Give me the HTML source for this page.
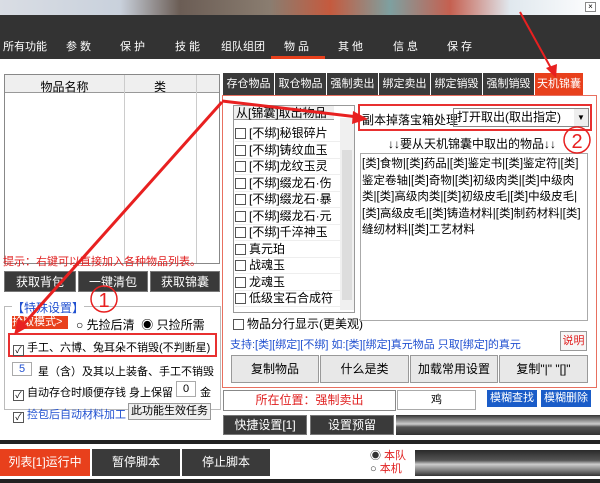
<!DOCTYPE html>
<html><head><meta charset="utf-8"><style>
*{margin:0;padding:0;box-sizing:border-box}
body{width:600px;height:483px;overflow:hidden;background:#fff;font-family:"Liberation Sans","Noto Sans CJK SC",sans-serif;font-size:11px;color:#000;position:relative}
.a{position:absolute;white-space:nowrap}
.nav{color:#fff;font-size:11px;top:38px}
.db{background:#3a3a3a;color:#fff;text-align:center;line-height:20px;border:1px solid #777;font-size:12px}
.gb{background:#e8e8e8;border:1px solid #999;text-align:center;line-height:26px;font-size:12px}
.tab{top:73px;height:22px;background:#3a3a3a;color:#fff;line-height:22px;text-align:center;width:51px;font-size:11px}
.cb{display:inline-block;width:11px;height:11px;border:1px solid #555;background:#fff;vertical-align:-2px;margin-right:3px;font-size:9px;line-height:9px;text-align:center}
.it{left:235px;width:105px;height:17px;line-height:17px;border-bottom:1px solid #eee;font-size:12px}
</style></head><body>
<div class="a" style="left:0;top:0;width:600px;height:15px;background:linear-gradient(90deg,#d9dde4 0,#c9d1dc 20%,#6b5d55 30%,#8a7d70 45%,#c55a3e 55%,#7ea0a0 65%,#c56050 75%,#e0e8ee 85%,#fff 100%)"></div>
<div class="a" style="left:585px;top:2px;width:11px;height:10px;border:1px solid #888;background:#fff;font-size:8px;line-height:8px;text-align:center">×</div>
<div class="a" style="left:0;top:15px;width:600px;height:44px;background:#333"></div>
<div class="a nav" style="left:3px">所有功能</div>
<div class="a nav" style="left:66px">参 数</div>
<div class="a nav" style="left:120px">保 护</div>
<div class="a nav" style="left:175px">技 能</div>
<div class="a nav" style="left:221px">组队组团</div>
<div class="a nav" style="left:284px">物 品</div>
<div class="a nav" style="left:338px">其 他</div>
<div class="a nav" style="left:393px">信 息</div>
<div class="a nav" style="left:447px">保 存</div>
<div class="a" style="left:271px;top:56px;width:54px;height:3px;background:#e8401c"></div>

<!-- left list -->
<div class="a" style="left:4px;top:74px;width:216px;height:190px;border:1px solid #888;background:#fff"></div>
<div class="a" style="left:5px;top:75px;width:214px;height:18px;background:#efefef;border-bottom:1px solid #999"></div>
<div class="a" style="left:5px;top:78px;width:119px;text-align:center;font-size:12px">物品名称</div>
<div class="a" style="left:124px;top:75px;width:1px;height:188px;background:#ccc"></div>
<div class="a" style="left:124px;top:78px;width:72px;text-align:center;font-size:12px">类</div>
<div class="a" style="left:196px;top:75px;width:1px;height:188px;background:#ccc"></div>
<div class="a" style="left:3px;top:253px;color:#e02020">提示：右键可以直接加入各种物品列表。</div>
<div class="a db" style="left:4px;top:271px;width:72px;height:21px">获取背包</div>
<div class="a db" style="left:78px;top:271px;width:70px;height:21px">一键清包</div>
<div class="a db" style="left:150px;top:271px;width:70px;height:21px">获取锦囊</div>

<!-- group -->
<div class="a" style="left:4px;top:306px;width:217px;height:104px;border:1px solid #bbb"></div>
<div class="a" style="left:12px;top:299px;background:#fff;color:#2050d0;font-size:12px">【特殊设置】</div>
<div class="a" style="left:12px;top:316px;width:56px;height:13px;background:#e8401c;color:#fff;line-height:13px">拾取模式&gt;</div>
<div class="a" style="left:76px;top:316px;font-size:12px">○ 先捡后清 &nbsp;◉ 只捡所需</div>
<div class="a" style="left:8px;top:333px;width:209px;height:24px;border:2px solid #e83030"></div>
<div class="a" style="left:13px;top:339px"><span class="cb">✓</span>手工、六博、兔耳朵不销毁(不判断星)</div>
<div class="a" style="left:12px;top:362px;width:20px;height:14px;border:1px solid #aaa;color:#2050d0;text-align:center;line-height:13px">5</div>
<div class="a" style="left:38px;top:363px">星（含）及其以上装备、手工不销毁</div>
<div class="a" style="left:13px;top:384px"><span class="cb">✓</span>自动存仓时顺便存钱 身上保留</div>
<div class="a" style="left:176px;top:381px;width:20px;height:16px;border:1px solid #aaa;text-align:center;line-height:15px">0</div>
<div class="a" style="left:200px;top:384px">金</div>
<div class="a" style="left:13px;top:406px"><span class="cb">✓</span><span style="color:#2050d0">捡包后自动材料加工</span></div>
<div class="a" style="left:128px;top:403px;width:83px;height:17px;background:#eee;border:1px solid #999;line-height:15px;text-align:center">此功能生效任务</div>

<!-- tabs -->
<div class="a tab" style="left:223px">存仓物品</div>
<div class="a tab" style="left:275px">取仓物品</div>
<div class="a tab" style="left:327px">强制卖出</div>
<div class="a tab" style="left:379px">绑定卖出</div>
<div class="a tab" style="left:431px">绑定销毁</div>
<div class="a tab" style="left:483px">强制销毁</div>
<div class="a tab" style="left:535px;width:48px;background:#e8401c">天机锦囊</div>
<div class="a" style="left:222px;top:95px;width:375px;height:293px;border:1px solid #e87060"></div>

<div class="a" style="left:233px;top:105px;width:122px;height:208px;border:1px solid #999;background:#fff"></div>
<div class="a" style="left:234px;top:106px;width:100px;height:14px;background:#efefef;border-bottom:1px solid #999;line-height:14px;padding-left:2px;font-size:12px">从[锦囊]取出物品</div>
<div class="a" style="left:340px;top:118px;width:14px;height:192px;background:#f0f0f0"></div>
<div class="a" style="left:342px;top:150px;width:10px;height:150px;background:#ddd"></div>
<div class="a it" style="top:125px"><span class="cb"></span>[不绑]秘银碎片</div>
<div class="a it" style="top:142px"><span class="cb"></span>[不绑]铸纹血玉</div>
<div class="a it" style="top:158px"><span class="cb"></span>[不绑]龙纹玉灵</div>
<div class="a it" style="top:175px"><span class="cb"></span>[不绑]缀龙石·伤</div>
<div class="a it" style="top:191px"><span class="cb"></span>[不绑]缀龙石·暴</div>
<div class="a it" style="top:208px"><span class="cb"></span>[不绑]缀龙石·元</div>
<div class="a it" style="top:224px"><span class="cb"></span>[不绑]千淬神玉</div>
<div class="a it" style="top:241px"><span class="cb"></span>真元珀</div>
<div class="a it" style="top:257px"><span class="cb"></span>战魂玉</div>
<div class="a it" style="top:274px"><span class="cb"></span>龙魂玉</div>
<div class="a it" style="top:290px"><span class="cb"></span>低级宝石合成符</div>
<div class="a" style="left:233px;top:315px;font-size:12px"><span class="cb"></span>物品分行显示(更美观)</div>

<div class="a" style="left:358px;top:104px;width:234px;height:27px;border:2px solid #e83030"></div>
<div class="a" style="left:362px;top:111px;font-size:12px">副本掉落宝箱处理</div>
<div class="a" style="left:453px;top:108px;width:136px;height:19px;border:1px solid #888;line-height:17px;padding-left:3px;font-size:12px">打开取出(取出指定)</div>
<div class="a" style="left:574px;top:109px;width:14px;height:17px;background:#eee;font-size:8px;text-align:center;line-height:17px">▼</div>
<div class="a" style="left:388px;top:135px;font-size:12px">↓↓要从天机锦囊中取出的物品↓↓</div>
<div class="a" style="left:360px;top:153px;width:228px;height:168px;border:1px solid #aaa;background:#fff"></div>
<div class="a" style="left:362px;top:156px;width:222px;white-space:normal;line-height:16.5px;font-size:11.5px;word-break:break-all">[类]食物|[类]药品|[类]鉴定书|[类]鉴定符|[类]鉴定卷轴|[类]奇物|[类]初级肉类|[类]中级肉类|[类]高级肉类|[类]初级皮毛|[类]中级皮毛|[类]高级皮毛|[类]铸造材料|[类]制药材料|[类]缝纫材料|[类]工艺材料</div>
<div class="a" style="left:230px;top:336px;color:#2050d0">支持:[类][绑定][不绑] 如:[类][绑定]真元物品 只取[绑定]的真元</div>
<div class="a" style="left:560px;top:331px;width:27px;height:20px;border:1px solid #999;background:#f6f6f6;color:#e02020;text-align:center;line-height:18px">说明</div>
<div class="a gb" style="left:231px;top:355px;width:88px;height:28px">复制物品</div>
<div class="a gb" style="left:320px;top:355px;width:89px;height:28px">什么是类</div>
<div class="a gb" style="left:410px;top:355px;width:88px;height:28px">加载常用设置</div>
<div class="a gb" style="left:499px;top:355px;width:89px;height:28px">复制"|" "[]"</div>

<div class="a" style="left:223px;top:390px;width:173px;height:21px;border:1px solid #888;color:#e02020;text-align:center;line-height:19px;font-size:12px">所在位置：强制卖出</div>
<div class="a" style="left:397px;top:390px;width:79px;height:20px;border:1px solid #aaa;text-align:center;line-height:18px">鸡</div>
<div class="a" style="left:487px;top:390px;width:50px;height:17px;background:#1a5cc8;color:#fff;text-align:center;line-height:17px">模糊查找</div>
<div class="a" style="left:541px;top:390px;width:50px;height:17px;background:#1a5cc8;color:#fff;text-align:center;line-height:17px">模糊删除</div>
<div class="a db" style="left:223px;top:415px;width:84px;height:20px;line-height:18px">快捷设置[1]</div>
<div class="a db" style="left:310px;top:415px;width:84px;height:20px;line-height:18px">设置预留</div>
<div class="a" style="left:396px;top:415px;width:204px;height:20px;background:linear-gradient(180deg,#333 0,#ccc 45%,#555 60%,#333 100%)"></div>

<!-- bottom -->
<div class="a" style="left:0;top:440px;width:600px;height:4px;background:#222"></div>
<div class="a" style="left:0;top:479px;width:600px;height:4px;background:#222"></div>
<div class="a" style="left:0;top:449px;width:90px;height:27px;background:#e8401c;color:#fff;text-align:center;line-height:27px;font-size:12px">列表[1]运行中</div>
<div class="a" style="left:92px;top:449px;width:88px;height:27px;background:#3a3a3a;color:#fff;text-align:center;line-height:27px;font-size:12px">暂停脚本</div>
<div class="a" style="left:182px;top:449px;width:88px;height:27px;background:#3a3a3a;color:#fff;text-align:center;line-height:27px;font-size:12px">停止脚本</div>
<div class="a" style="left:370px;top:450px;color:#e02020;line-height:13px;font-size:11px"><span style="color:#333">◉</span> 本队<br><span style="color:#333">○</span> 本机</div>
<div class="a" style="left:415px;top:450px;width:185px;height:26px;background:linear-gradient(180deg,#2a2a2a 0,#555 40%,#ccc 55%,#333 100%)"></div>

<svg class="a" style="left:0;top:0" width="600" height="483">
<g stroke="#e82020" fill="none">
<line x1="222" y1="102" x2="22" y2="326" stroke-width="3"/>
<line x1="222" y1="101" x2="358" y2="117" stroke-width="3"/>
<line x1="520" y1="12" x2="552" y2="70" stroke-width="2"/>
<circle cx="104" cy="299" r="13" stroke-width="1.5"/>
<circle cx="577" cy="140" r="13" stroke-width="1.5"/>
</g>
<g fill="#e82020">
<polygon points="14,335 18,318 28,327"/>
<polygon points="368,119 353,111 352,124"/>
<polygon points="556,78 546,68 557,64"/>
</g>
<text x="104" y="307" font-size="20" text-anchor="middle" fill="#e82020" font-family="Liberation Sans">1</text>
<text x="577" y="148" font-size="20" text-anchor="middle" fill="#e82020" font-family="Liberation Sans">2</text>
</svg>
</body></html>
